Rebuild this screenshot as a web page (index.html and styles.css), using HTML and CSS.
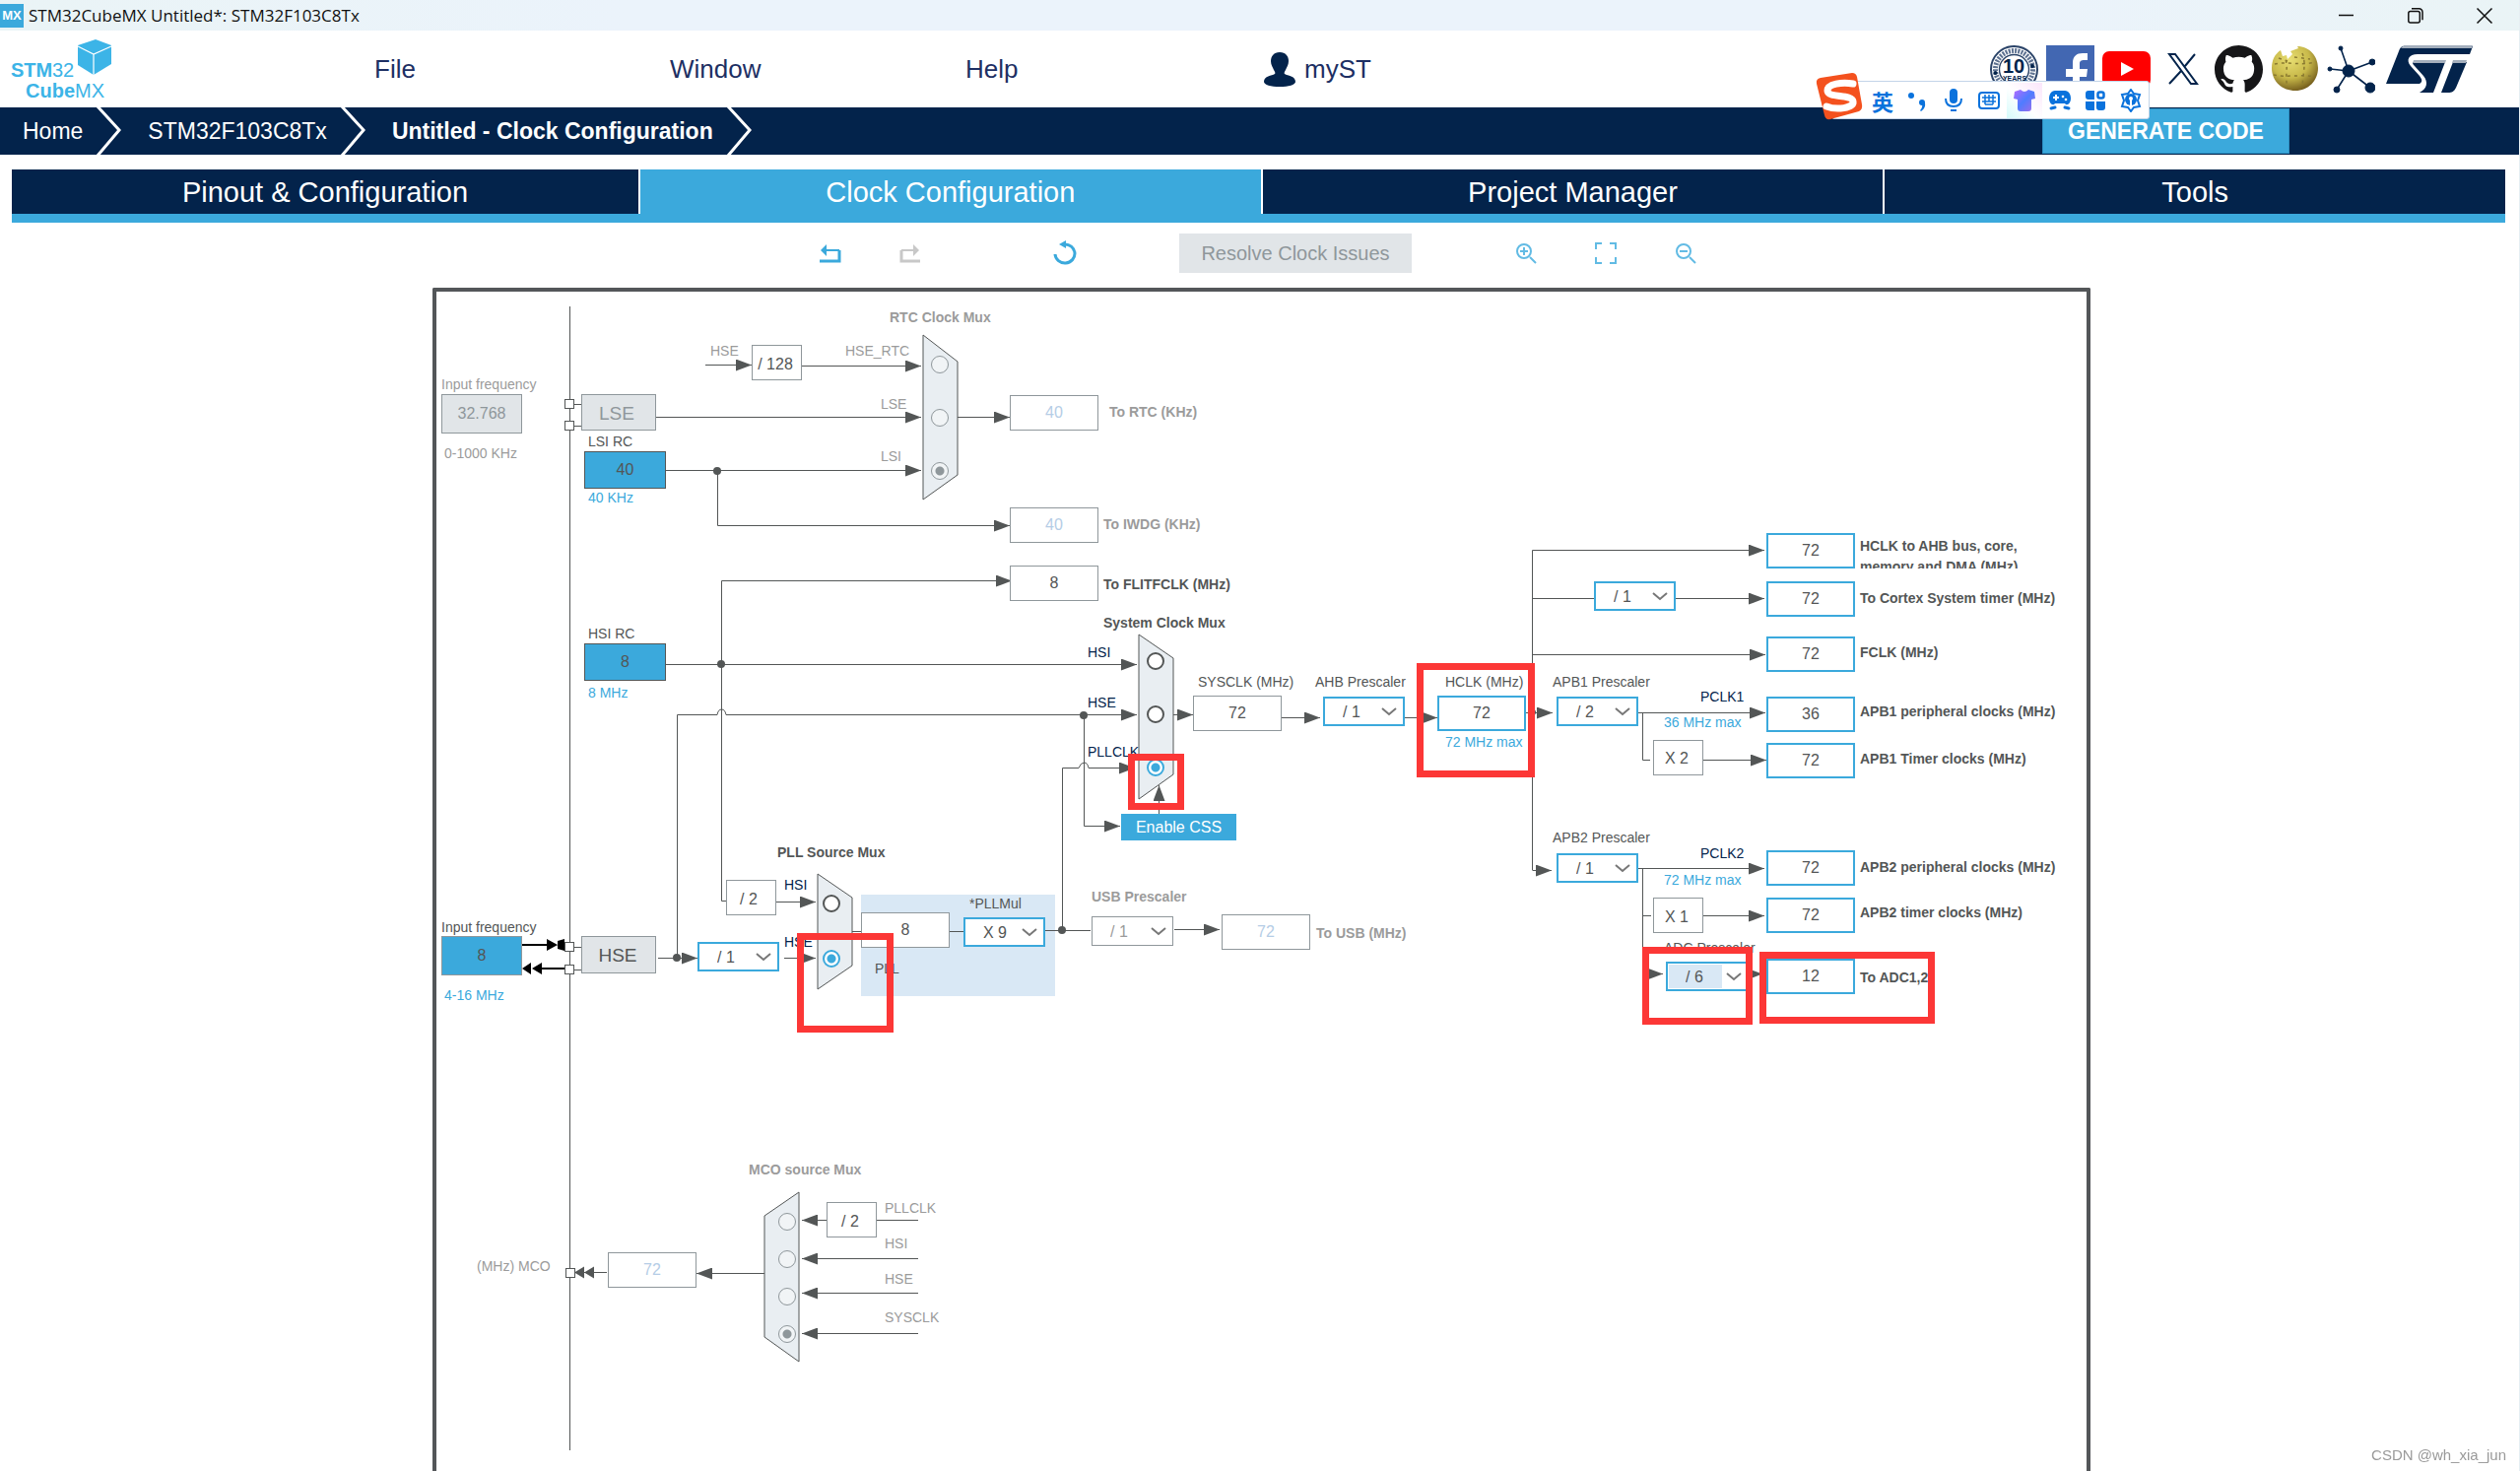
FILE: index.html
```html
<!DOCTYPE html>
<html lang="en">
<head>
    <meta charset="UTF-8">
    <meta name="viewport" content="width=device-width, initial-scale=1.0">
    <title>STM32CubeMX Untitled*: STM32F103C8Tx</title>
    <link rel="stylesheet" href="styles.css">
</head>
<body>
    <!-- window title bar -->
    <div class="titlebar">
        <span class="app-badge">MX</span>
        <span class="app-title">STM32CubeMX Untitled*: STM32F103C8Tx</span>
        <div class="window-controls">
            <button type="button" aria-label="Minimize"><svg width="16" height="16" viewBox="0 0 16 16"><path d="M0 7.5h15"/></svg></button>
            <button type="button" aria-label="Restore"><svg width="16" height="16" viewBox="0 0 16 16"><rect x="0.8" y="3.5" width="11.5" height="11.5" rx="2"/><path d="M4 0.8h7.5a3.5 3.5 0 0 1 3.5 3.5v8"/></svg></button>
            <button type="button" aria-label="Close"><svg width="16" height="16" viewBox="0 0 16 16"><path d="M0.5 0.5l15 15M15.5 0.5l-15 15"/></svg></button>
        </div>
    </div>

    <!-- main menu -->
    <header class="header">
        <svg class="logo" width="112" height="78" viewBox="0 0 112 78" role="img" aria-label="STM32 CubeMX">
            <path fill="#3cb4e7" d="M71 15L89 9l16 6v19L87 45 71 35z"/>
            <path fill="none" stroke="#fff" stroke-width="1.2" d="M71 16l16 8 18-8M87 24v21"/>
            <text x="3" y="47" class="logo-bold">STM</text>
            <text x="45" y="47" class="logo-thin">32</text>
            <text x="18" y="68" class="logo-bold">Cube</text>
            <text x="68" y="68" class="logo-thin">MX</text>
        </svg>
        <nav class="menu">
            <a href="#file">File</a>
            <a href="#window">Window</a>
            <a href="#help">Help</a>
            <a href="#myst">
                <svg width="36" height="36" viewBox="0 0 36 36"><path fill="#03234b" d="M19 1c6 0 9 4 9 9 0 4-2 6-3 9-1 2-2 3-1 4 3 2 11 2 11 8 0 3-7 5-16 5S3 34 3 31c0-6 8-6 11-8 1-1 0-2-1-4-1-3-3-5-3-9 0-5 3-9 9-9z"/></svg>
                myST</a>
        </nav>
        <div class="social">
            <a href="#ten-years" aria-label="Longevity 10 years">
                <svg width="49" height="49" viewBox="0 0 49 49">
                    <circle cx="24.5" cy="24.5" r="23.5" fill="#fff" stroke="#2a4368" stroke-width="2"/>
                    <circle cx="24.5" cy="24.5" r="19" fill="none" stroke="#5d7190" stroke-width="5" stroke-dasharray="2 1.2"/>
                    <circle cx="24.5" cy="24.5" r="15" fill="#fff" stroke="#2a4368" stroke-width="1.4"/>
                    <text x="24" y="28" class="stamp-number">10</text>
                    <text x="25" y="36" class="stamp-years">YEARS</text>
                    <circle cx="5.5" cy="28" r="2" fill="#03234b"/><circle cx="43" cy="21" r="2" fill="#03234b"/>
                </svg>
            </a>
            <a href="#facebook" aria-label="Facebook">
                <svg width="49" height="49" viewBox="0 0 49 49"><rect width="49" height="49" fill="#4267b2"/><path fill="#fff" d="M27 49V32h-7v-8h7v-6c0-7 4-10 10-10h5v7h-3c-4 0-5 1-5 4v5h8l-1 8h-7v17z"/></svg>
            </a>
            <a href="#youtube" aria-label="YouTube">
                <svg width="49" height="49" viewBox="0 0 49 49"><rect y="6" width="49" height="36" rx="7" fill="#f00"/><path fill="#fff" d="M19 17v14l13-7z"/></svg>
            </a>
            <a href="#x" aria-label="X">
                <svg width="49" height="49" viewBox="0 0 49 49" fill="none" stroke="#03234b" stroke-width="2"><path d="M11 9h6l22 30h-6zM37 9L27 21M23 26L11 39"/></svg>
            </a>
            <a href="#github" aria-label="GitHub">
                <svg width="49" height="49" viewBox="0 0 16 16"><path fill="#161618" d="M8 0C3.58 0 0 3.58 0 8c0 3.54 2.29 6.53 5.47 7.59.4.07.55-.17.55-.38 0-.19-.01-.82-.01-1.49-2.01.37-2.53-.49-2.69-.94-.09-.23-.48-.94-.82-1.13-.28-.15-.68-.52-.01-.53.63-.01 1.08.58 1.23.82.72 1.21 1.87.87 2.33.66.07-.52.28-.87.51-1.07-1.78-.2-3.64-.89-3.64-3.95 0-.87.31-1.59.82-2.15-.08-.2-.36-1.02.08-2.12 0 0 .67-.21 2.2.82.64-.18 1.32-.27 2-.27s1.36.09 2 .27c1.53-1.04 2.2-.82 2.2-.82.44 1.1.16 1.92.08 2.12.51.56.82 1.27.82 2.15 0 3.07-1.87 3.75-3.65 3.95.29.25.54.73.54 1.48 0 1.07-.01 1.93-.01 2.2 0 .21.15.46.55.38A8.01 8.01 0 0 0 16 8c0-4.42-3.58-8-8-8z"/></svg>
            </a>
            <a href="#wiki" aria-label="Wiki">
                <svg width="49" height="49" viewBox="0 0 49 49">
                    <defs><radialGradient id="globe" cx="0.4" cy="0.3" r="0.75"><stop offset="0" stop-color="#e8de72"/><stop offset="0.55" stop-color="#c8b94a"/><stop offset="1" stop-color="#6c5418"/></radialGradient></defs>
                    <path fill="url(#globe)" d="M10 5l2 6 4-1 1 4 5-5-2-3 8-3-1-2c12 0 21 10 21 22 0 13-10 23-23 23S1 37 1 23C1 15 4 9 10 5z"/>
                    <path fill="none" stroke="#8a7a30" stroke-width="1.5" stroke-dasharray="3 4" d="M4 19c12-3 26 2 42-2M3 30c12 3 28-1 42 2M15 15c3 8-1 16 2 28M32 8c4 9 1 20 0 34M8 13l9 3M24 12l16 2"/>
                </svg>
            </a>
            <a href="#community" aria-label="Community">
                <svg width="49" height="49" viewBox="0 0 49 49" fill="#03234b" stroke="#03234b"><path stroke-width="1.6" d="M22 26L14 3M22 26L46 17M22 26L3 24M22 26L10 45M22 26l22 17"/><circle cx="22" cy="26" r="6"/><circle cx="14" cy="3" r="2"/><circle cx="46" cy="17" r="3"/><circle cx="3" cy="24" r="2"/><circle cx="10" cy="45" r="3"/><circle cx="44" cy="43" r="5"/></svg>
            </a>
            <a href="#st" aria-label="STMicroelectronics">
                <svg class="st-logo" width="88" height="49" viewBox="0 0 88 49" fill="#03234b">
                    <path d="M18 1h70l-3 8H32c-9 0-12 6-7 12l9 10c3 4 3 6 0 8H0L13 6c1-3 2-5 5-5z"/>
                    <path d="M27 17h33L48 48H34c8-4 9-11 4-17l-9-10c-2-2-2-3-2-4zM68 17h14L71 43c-2 4-4 5-8 5h-7z"/>
                    <path fill="#a3aebc" d="M18 0h70l-1 3H15zM28 15h33l-1 3H27zM68 15h14l-1 3H67z"/>
                </svg>
            </a>
        </div>

        <!-- input method bar -->
        <div class="ime">
            <svg class="ime-logo" width="48" height="48" viewBox="0 0 48 48"><path fill="#f4511e" d="M5 5L37 0q4 0 5 4l5 28q1 5-3 7L15 47q-5 1-6-4L1 11q-1-5 4-6z"/><path fill="none" stroke="#fff" stroke-width="7" stroke-linecap="round" d="M38 11C27 9 12 11 12 18c0 8 25 3 26 11 1 7-17 9-27 5"/></svg>
            <button type="button" lang="zh-CN">英</button>
            <button type="button" aria-label="Punctuation"><svg width="24" height="24" viewBox="0 0 24 24"><circle cx="5" cy="7" r="3"/><circle cx="16" cy="14" r="3"/><path d="M19 14q1 6-4 9l-1-1q3-3 2-7z"/></svg></button>
            <button type="button" aria-label="Voice"><svg width="24" height="24" viewBox="0 0 24 24"><rect x="8" width="8" height="15" rx="4"/><path fill="none" stroke="#0a72dc" stroke-width="2" d="M4 10c0 5 3 8 8 8s8-3 8-8"/><rect x="9" y="21" width="6" height="2"/></svg></button>
            <button type="button" aria-label="Keyboard"><svg class="outline" width="24" height="24" viewBox="0 0 24 24"><rect x="2" y="4" width="20" height="16" rx="3"/><path stroke-width="1.5" d="M5 9h14M5 13h14M8 6v10M12 6v7M16 6v10M8 16h8"/></svg></button>
            <button type="button" class="ime-skin" aria-label="Skin"><svg width="24" height="24" viewBox="0 0 24 24"><defs><linearGradient id="skin" x1="0" y1="0" x2="1" y2="1"><stop offset="0" stop-color="#b56bff"/><stop offset="0.5" stop-color="#4f7cff"/><stop offset="1" stop-color="#a66be8"/></linearGradient></defs><path fill="url(#skin)" d="M2 3l6-2q4 4 8 0l6 2 1 7-4 1v9q0 3-3 3H8q-3 0-3-3v-9l-4-1z"/></svg></button>
            <button type="button" aria-label="Games"><svg width="24" height="24" viewBox="0 0 24 24"><path d="M7 2h10c4 0 6 4 6 8 0 5-4 8-6 5H7c-2 3-6 0-6-5 0-4 2-8 6-8z"/><path fill="none" stroke="#0a72dc" stroke-width="3" stroke-linecap="round" d="M3 20l4-1M21 20l-4-1"/><path stroke="#fff" stroke-width="2" d="M5 9h6M8 6v6"/><circle cx="15" cy="8" r="1.3" fill="#fff"/><circle cx="18" cy="11" r="1.3" fill="#fff"/></svg></button>
            <button type="button" aria-label="Toolbox"><svg width="24" height="24" viewBox="0 0 24 24"><path d="M5 2h6v9H5q-3 0-3-3V5q0-3 3-3zM2 13h9v9H5q-3 0-3-3zM13 13h9v6q0 3-3 3h-3q-3 0-3-3z"/><rect x="14.5" y="3.5" width="6" height="6" rx="2" fill="none" stroke="#0a72dc" stroke-width="2.5"/></svg></button>
            <button type="button" aria-label="Settings"><svg width="24" height="24" viewBox="0 0 24 24"><path fill="none" stroke="#0a72dc" stroke-width="2" d="M12 1l3 4 6 1-2 6 2 6-6 1-3 4-3-4-6-1 2-6-2-6 6-1z"/><circle cx="12" cy="11" r="6"/><path stroke="#fff" stroke-width="2" d="M12 10v9"/><circle cx="12" cy="10" r="2" fill="#fff"/></svg></button>
        </div>
    </header>

    <!-- breadcrumb -->
    <div class="breadcrumb">
        <a href="#home">Home</a>
        <svg width="26" height="48" viewBox="0 0 26 48"><path d="M2 -1l22 24L2 49"/></svg>
        <a href="#mcu">STM32F103C8Tx</a>
        <svg width="26" height="48" viewBox="0 0 26 48"><path d="M2 -1l22 24L2 49"/></svg>
        <a href="#clock" class="current">Untitled - Clock Configuration</a>
        <svg width="26" height="48" viewBox="0 0 26 48"><path d="M2 -1l22 24L2 49"/></svg>
        <button type="button" class="generate">GENERATE CODE</button>
    </div>

    <!-- tabs -->
    <div class="tabs" role="tablist">
        <button type="button" role="tab" class="tab">Pinout &amp; Configuration</button>
        <button type="button" role="tab" class="tab active" aria-selected="true">Clock Configuration</button>
        <button type="button" role="tab" class="tab">Project Manager</button>
        <button type="button" role="tab" class="tab">Tools</button>
    </div>

    <!-- toolbar -->
    <div class="toolbar">
        <div class="tool-group">
            <button type="button" aria-label="Undo"><svg width="24" height="24" viewBox="0 0 24 24"><path stroke-width="3" d="M1 20h20V9"/><path stroke-width="2" d="M21 9H4"/><path class="solid" d="M2 9l6-6v12z"/></svg></button>
            <button type="button" aria-label="Redo" class="off" disabled><svg width="24" height="24" viewBox="0 0 24 24"><path stroke-width="3" d="M22 20H3V9"/><path stroke-width="2" d="M3 9h16"/><path class="solid" d="M21 9l-6-6v12z"/></svg></button>
        </div>
        <button type="button" aria-label="Reset"><svg width="24" height="24" viewBox="0 0 24 24"><path stroke-width="3" d="M2 13a10 9.5 0 1 0 9-10"/><path class="solid" d="M6 3l7-4v8z"/></svg></button>
        <button type="button" class="resolve" disabled>Resolve Clock Issues</button>
        <div class="tool-group fine">
            <button type="button" aria-label="Zoom in"><svg width="24" height="24" viewBox="0 0 24 24"><circle cx="10" cy="10" r="7"/><path d="M6 10h8M10 6v8"/><path d="M16 16l6 6"/></svg></button>
            <button type="button" aria-label="Best fit"><svg width="24" height="24" viewBox="0 0 24 24"><path d="M2 8V2h6M16 2h6v6M22 16v6h-6M8 22H2v-6"/></svg></button>
            <button type="button" aria-label="Zoom out"><svg width="24" height="24" viewBox="0 0 24 24"><circle cx="10" cy="10" r="7"/><path d="M6 10h8"/><path d="M16 16l6 6"/></svg></button>
        </div>
    </div>

    <!-- clock tree -->
    <main class="workspace">
        <div class="diagram">
            <svg class="wiring" width="1683" height="1201" viewBox="440 292 1683 1201">
                <defs>
                    <marker id="arrow" viewBox="0 0 16 12" refX="16" refY="6" markerWidth="16" markerHeight="12" markerUnits="userSpaceOnUse" orient="auto"><path d="M0 0l16 6-16 6z" fill="#535656"/></marker>
                    <clipPath id="ahb-clip"><rect x="1880" y="540" width="200" height="37"/></clipPath>
                </defs>

                <!-- PLL area -->
                <rect x="875" y="908" width="197" height="103" fill="#d9e8f5"/>

                <!-- wires -->
                <g class="wire">
                    <path d="M579.5 311V1472"/>
                    <path d="M584 410.5h7M584 432.5h7M584 961.5h7M584 984.5h7"/>
                    <path class="to" d="M717 370.5H764"/>
                    <path class="to" d="M815 371.5H936"/>
                    <path class="to" d="M666 423.5H936"/>
                    <path class="to" d="M677 477.5H936"/>
                    <path class="to" d="M729.5 477V533.5H1026"/>
                    <path class="to" d="M973 423.5H1026"/>
                    <path class="to" d="M733.5 674V589.5H1028"/>
                    <path class="to" d="M677 674.5H1155"/>
                    <path d="M733.5 674V914.5H738"/>
                    <path class="to" d="M688.5 972V725.5H729Q730 720 733.5 720T738 725.5H1155"/>
                    <path class="to" d="M1101.5 726V838.5H1138"/>
                    <path class="to" d="M1079.5 944V779.5H1096Q1098 774 1101.5 774T1106 779.5H1153"/>
                    <path class="to" d="M1177.5 826V797"/>
                    <path class="to" d="M1192 725.5H1212"/>
                    <path class="to" d="M1302 728.5H1341"/>
                    <path class="to" d="M1427 728.5H1460"/>
                    <path class="to" d="M1550 723.5H1577"/>
                    <path class="to" d="M1556.5 883V558.5H1792"/>
                    <path d="M1556.5 607.5H1619"/>
                    <path class="to" d="M1701 607.5H1792"/>
                    <path class="to" d="M1556.5 664.5H1793"/>
                    <path class="to" d="M1556.5 883.5H1576"/>
                    <path class="to" d="M1664 723.5H1793"/>
                    <path d="M1668.5 723V771.5H1676"/>
                    <path class="to" d="M1730 771.5H1794"/>
                    <path class="to" d="M1664 881.5H1792"/>
                    <path class="to" d="M1668.5 881V988.5H1689"/>
                    <path d="M1668.5 929.5H1677"/>
                    <path class="to" d="M1730 929.5H1792"/>
                    <path class="to" d="M1770 988.5H1790"/>
                    <path class="to" d="M789 915.5H829"/>
                    <path class="to" d="M669 972.5H709"/>
                    <path class="to" d="M797 972.5H829"/>
                    <path d="M866 945.5h9M964 945.5h15M1062 944.5H1108"/>
                    <path class="to" d="M1193 943.5H1239"/>
                    <path class="to" d="M840 1238.5H815"/>
                    <path d="M891 1238.5H933"/>
                    <path class="to" d="M933 1277.5H815"/>
                    <path class="to" d="M933 1312.5H815"/>
                    <path class="to" d="M933 1353.5H815"/>
                    <path class="to" d="M777 1292.5H708"/>
                    <path d="M617 1291.5H590"/>
                </g>
                <path fill="#535656" d="M584 1291.5l10-6v12zM594 1291.5l10-6v12z"/>
                <path stroke="#000" stroke-width="2" d="M531 959h26M551 983h23"/>
                <path fill="#000" d="M567 959l-11-6v12zM574 953v12l-7-2v-8zM531 983l9-6v12zM541 983l10-6v12z"/>

                <!-- junctions -->
                <g fill="#535656">
                    <circle cx="729" cy="478" r="4"/><circle cx="733" cy="674" r="4"/><circle cx="688" cy="972" r="4"/>
                    <circle cx="1101" cy="726" r="4"/><circle cx="1079" cy="944" r="4"/><circle cx="1557" cy="723" r="3"/>
                </g>

                <!-- pins -->
                <g class="box pin">
                    <rect x="574.5" y="405.5" width="9" height="9"/><rect x="574.5" y="427.5" width="9" height="9"/>
                    <rect x="574.5" y="956.5" width="9" height="9"/><rect x="574.5" y="979.5" width="9" height="9"/>
                    <rect x="575.5" y="1287.5" width="9" height="9"/>
                </g>

                <!-- multiplexers -->
                <g class="mux">
                    <path d="M938 340L973 367V482L938 507z"/>
                    <path d="M1157 644L1192 668V786L1157 811z"/>
                    <path d="M831 887L866 911V980L831 1004z"/>
                    <path d="M812 1210L777 1234V1357L812 1382z"/>
                </g>

                <!-- fixed dividers, multipliers and oscillators -->
                <g class="box">
                    <rect x="764.5" y="350.5" width="50" height="35"/><rect x="738.5" y="893.5" width="50" height="35"/>
                    <rect x="1679.5" y="751.5" width="50" height="35"/><rect x="1679.5" y="911.5" width="50" height="35"/>
                    <rect x="840.5" y="1220.5" width="50" height="35"/>
                    <rect class="osc-box" x="591.5" y="400.5" width="75" height="36"/><rect class="osc-box" x="591.5" y="950.5" width="75" height="37"/>
                </g>
                <g class="value">
                    <text x="788" y="375">/ 128</text><text x="761" y="918">/ 2</text>
                    <text x="1703" y="775">X 2</text><text x="1703" y="936">X 1</text><text x="864" y="1245">/ 2</text>
                </g>
                <g class="osc"><text x="627" y="426" fill="#8f979b">LSE</text><text x="628" y="976">HSE</text></g>

                <!-- captions -->
                <g class="caption muted">
                    <text x="449" y="395">Input frequency</text><text x="452" y="465">0-1000 KHz</text>
                    <text x="722" y="361">HSE</text><text x="859" y="361">HSE_RTC</text>
                    <text x="895" y="415">LSE</text><text x="895" y="468">LSI</text>
                    <text x="485" y="1290">(MHz) MCO</text>
                    <text x="899" y="1231">PLLCLK</text><text x="899" y="1267">HSI</text><text x="899" y="1303">HSE</text><text x="899" y="1342">SYSCLK</text>
                </g>
                <g class="caption muted strong">
                    <text x="904" y="327">RTC Clock Mux</text><text x="1127" y="423">To RTC (KHz)</text><text x="1121" y="537">To IWDG (KHz)</text>
                    <text x="1109" y="915">USB Prescaler</text><text x="1337" y="952">To USB (MHz)</text><text x="761" y="1192">MCO source Mux</text>
                </g>
                <g class="caption">
                    <text x="598" y="453">LSI RC</text><text x="598" y="648">HSI RC</text><text x="449" y="946">Input frequency</text>
                    <text x="1217" y="697">SYSCLK (MHz)</text><text x="1336" y="697">AHB Prescaler</text><text x="1468" y="697">HCLK (MHz)</text>
                    <text x="1577" y="697">APB1 Prescaler</text><text x="1577" y="855">APB2 Prescaler</text><text x="1690" y="967">ADC Prescaler</text>
                    <text x="985" y="922">*PLLMul</text><text x="889" y="988">PLL</text>
                </g>
                <g class="caption strong">
                    <text x="1121" y="598">To FLITFCLK (MHz)</text><text x="1121" y="637">System Clock Mux</text>
                    <text x="790" y="870">PLL Source Mux</text>
                    <g clip-path="url(#ahb-clip)"><text x="1889" y="559">HCLK to AHB bus, core,</text><text x="1889" y="580">memory and DMA (MHz)</text></g>
                    <text x="1889" y="612">To Cortex System timer (MHz)</text><text x="1889" y="667">FCLK (MHz)</text>
                    <text x="1889" y="727">APB1 peripheral clocks (MHz)</text><text x="1889" y="775">APB1 Timer clocks (MHz)</text>
                    <text x="1889" y="885">APB2 peripheral clocks (MHz)</text><text x="1889" y="931">APB2 timer clocks (MHz)</text>
                    <text x="1889" y="997">To ADC1,2</text>
                </g>
                <g class="caption navy">
                    <text x="1105" y="667">HSI</text><text x="1105" y="718">HSE</text><text x="1105" y="768">PLLCLK</text>
                    <text x="797" y="903">HSI</text><text x="797" y="961">HSE</text><text x="1727" y="712">PCLK1</text><text x="1727" y="871">PCLK2</text>
                </g>
                <g class="caption blue">
                    <text x="598" y="510">40 KHz</text><text x="598" y="708">8 MHz</text><text x="452" y="1015">4-16 MHz</text>
                    <text x="1468" y="758">72 MHz max</text><text x="1690" y="738">36 MHz max</text><text x="1690" y="898">72 MHz max</text>
                </g>
            </svg>

            <!-- clock sources -->
            <input class="source off lse-in" value="32.768" aria-label="LSE input frequency" disabled>
            <input class="source hse-in" value="8" aria-label="HSE input frequency">
            <input class="source rc lsi-rc" value="40" aria-label="LSI RC" readonly>
            <input class="source rc hsi-rc" value="8" aria-label="HSI RC" readonly>

            <!-- frequencies -->
            <input class="freq unused rtc-out" value="40" aria-label="To RTC (KHz)" disabled>
            <input class="freq unused iwdg-out" value="40" aria-label="To IWDG (KHz)" disabled>
            <input class="freq flit-out" value="8" aria-label="To FLITFCLK (MHz)" readonly>
            <input class="freq sysclk" value="72" aria-label="SYSCLK (MHz)" readonly>
            <input class="freq live hclk" value="72" aria-label="HCLK (MHz)">
            <input class="freq live ahb-out" value="72" aria-label="HCLK to AHB bus, core, memory and DMA (MHz)">
            <input class="freq live cortex-out" value="72" aria-label="To Cortex System timer (MHz)">
            <input class="freq live fclk-out" value="72" aria-label="FCLK (MHz)">
            <input class="freq live apb1-out" value="36" aria-label="APB1 peripheral clocks (MHz)">
            <input class="freq live apb1-timer" value="72" aria-label="APB1 Timer clocks (MHz)">
            <input class="freq live apb2-out" value="72" aria-label="APB2 peripheral clocks (MHz)">
            <input class="freq live apb2-timer" value="72" aria-label="APB2 timer clocks (MHz)">
            <input class="freq live adc-out" value="12" aria-label="To ADC1,2">
            <input class="freq pll-in" value="8" aria-label="PLL input (MHz)" readonly>
            <input class="freq unused usb-out" value="72" aria-label="To USB (MHz)" disabled>
            <input class="freq unused mco-out" value="72" aria-label="MCO (MHz)" disabled>

            <!-- prescalers -->
            <select class="prescaler hse-div" aria-label="HSE prescaler"><option>/ 1</option></select>
            <select class="prescaler pll-mul" aria-label="PLLMul"><option>X 9</option></select>
            <select class="prescaler unused usb-div" aria-label="USB Prescaler" disabled><option>/ 1</option></select>
            <select class="prescaler ahb-div" aria-label="AHB Prescaler"><option>/ 1</option></select>
            <select class="prescaler cortex-div" aria-label="Cortex prescaler"><option>/ 1</option></select>
            <select class="prescaler apb1-div" aria-label="APB1 Prescaler"><option>/ 2</option></select>
            <select class="prescaler apb2-div" aria-label="APB2 Prescaler"><option>/ 1</option></select>
            <select class="prescaler focused adc-div" aria-label="ADC Prescaler"><option>/ 6</option></select>

            <!-- mux inputs -->
            <div class="mux-inputs rtc-mux">
                <input type="radio" name="rtc" aria-label="RTC from HSE" disabled>
                <input type="radio" name="rtc" aria-label="RTC from LSE" disabled>
                <input type="radio" name="rtc" aria-label="RTC from LSI" disabled checked>
            </div>
            <div class="mux-inputs sys-mux">
                <input type="radio" name="sys" aria-label="System clock from HSI">
                <input type="radio" name="sys" aria-label="System clock from HSE">
                <input type="radio" name="sys" aria-label="System clock from PLLCLK" checked>
            </div>
            <div class="mux-inputs pll-mux">
                <input type="radio" name="pll" aria-label="PLL from HSI">
                <input type="radio" name="pll" aria-label="PLL from HSE" checked>
            </div>
            <div class="mux-inputs mco-mux">
                <input type="radio" name="mco" aria-label="MCO from PLLCLK" disabled>
                <input type="radio" name="mco" aria-label="MCO from HSI" disabled>
                <input type="radio" name="mco" aria-label="MCO from HSE" disabled>
                <input type="radio" name="mco" aria-label="MCO from SYSCLK" disabled checked>
            </div>

            <button type="button" class="enable-css">Enable CSS</button>

            <!-- highlights -->
            <div class="mark mark-pll"></div>
            <div class="mark mark-sys"></div>
            <div class="mark mark-hclk"></div>
            <div class="mark mark-adc-div"></div>
            <div class="mark mark-adc"></div>
        </div>
    </main>

    <div class="watermark">CSDN @wh_xia_jun</div>
</body>
</html>
```
FILE: styles.css
```css
:root {
    --navy: #03234b;
    --blue: #3ba9dc;
    --grey: #8f979b;
    --text: #535656;
    --muted: #9b9b9b;
    --panel: #e1e5e8;
    --mark: #fc3736;
    --chevron: url("data:image/svg+xml,%3Csvg xmlns='http://www.w3.org/2000/svg' width='16' height='9'%3E%3Cpath d='M1 1l7 6 7-6' fill='none' stroke='%23777' stroke-width='2'/%3E%3C/svg%3E");
}

* {
    margin: 0;
    padding: 0;
    box-sizing: border-box;
}

body {
    min-height: 100vh;
    display: flex;
    flex-direction: column;
    border-right: 1px solid #e6eff3;
    background: #fff;
    color: var(--text);
    font-family: "Liberation Sans", Arial, sans-serif;
}

button,
input,
select {
    font-family: inherit;
    border: 0;
    background: none;
}

a {
    color: inherit;
    text-decoration: none;
}

svg {
    display: block;
}

/* title bar */
.titlebar {
    display: flex;
    align-items: center;
    height: 31px;
    background: linear-gradient(to right, #eaf4f6, #ebf3fb 25%, #ebf3fb 80%, #eaf4f6);
    color: #111;
}

.app-badge {
    width: 24px;
    height: 24px;
    margin-right: 5px;
    background: var(--blue);
    color: #fff;
    font-size: 13px;
    font-weight: bold;
    line-height: 24px;
    text-align: center;
}

.app-title {
    font-family: "Open Sans", "Noto Sans", sans-serif;
    font-size: 17px;
}

.window-controls {
    display: flex;
    margin-left: auto;
}

.window-controls button {
    display: flex;
    justify-content: center;
    align-items: center;
    width: 70px;
    height: 28px;
}

.window-controls svg {
    fill: none;
    stroke: #111;
    stroke-width: 1.5;
    overflow: visible;
}

/* header */
.header {
    position: relative;
    display: flex;
    align-items: center;
    height: 78px;
    padding: 0 47px 0 8px;
}

.logo-bold,
.logo-thin {
    fill: #3cb4e7;
    font-size: 20px;
}

.logo-bold {
    font-weight: bold;
}

.menu {
    flex: 1;
    display: flex;
    margin-left: 260px;
    color: #1d2f63;
    font-size: 26px;
}

.menu a {
    display: flex;
    align-items: center;
    gap: 8px;
    flex: 0 1 300px;
}

.social {
    display: flex;
    gap: 8px;
}

.st-logo {
    margin-left: 3px;
}

.stamp-number,
.stamp-years {
    fill: var(--navy);
    font-weight: bold;
    text-anchor: middle;
}

.stamp-number {
    font-size: 20px;
}

.stamp-years {
    font-size: 7px;
}

/* input method bar */
.ime {
    position: absolute;
    z-index: 2;
    top: 51px;
    right: 375px;
    display: flex;
    align-items: center;
    height: 39px;
    padding-left: 33px;
    border: 1px solid #c3d4e8;
    border-radius: 3px;
    background: #fff;
}

.ime-logo {
    position: absolute;
    left: 0;
    bottom: -2px;
    margin-left: -17px;
}

.ime button {
    display: flex;
    justify-content: center;
    align-items: center;
    width: 36px;
    height: 36px;
    color: #0a72dc;
    font-family: "Noto Sans CJK SC", sans-serif;
    font-size: 22px;
    font-weight: bold;
}

.ime button svg {
    fill: #0a72dc;
}

.ime button .outline {
    fill: none;
    stroke: #0a72dc;
    stroke-width: 2;
}

.ime .ime-skin {
    background: linear-gradient(45deg, #d5fbfb, #fff 45%, #fbe6fb);
}

/* breadcrumb */
.breadcrumb {
    display: flex;
    align-items: center;
    gap: 13px;
    height: 48px;
    padding: 0 233px 0 23px;
    background: var(--navy);
    color: #fff;
    font-size: 23px;
}

.breadcrumb svg {
    margin-right: 14px;
    fill: none;
    stroke: #fff;
    stroke-width: 3;
}

.breadcrumb .current {
    font-weight: bold;
}

.generate {
    width: 251px;
    height: 46px;
    margin-left: auto;
    border: 1px solid #2d8fc2;
    background: var(--blue);
    color: #fff;
    font-size: 23px;
    font-weight: bold;
}

/* tabs */
.tabs {
    display: flex;
    gap: 2px;
    margin: 15px 14px 0 12px;
    border-bottom: 9px solid var(--blue);
}

.tab {
    flex: 1;
    height: 45px;
    padding-top: 2px;
    background: var(--navy);
    color: #fff;
    font-size: 29px;
}

.tab:first-child {
    flex-grow: 1.01;
}

.tab.active {
    background: var(--blue);
}

/* toolbar */
.toolbar {
    display: flex;
    justify-content: center;
    align-items: center;
    gap: 104px;
    height: 66px;
    padding: 0 3px 4px 0;
}

.tool-group {
    display: flex;
    gap: 57px;
}

.tool-group:first-child {
    margin-right: 29px;
}

.toolbar svg {
    fill: none;
    stroke: var(--blue);
    overflow: visible;
}

.toolbar .fine svg {
    stroke: #62bbe4;
    stroke-width: 2;
}

.toolbar .solid {
    fill: var(--blue);
    stroke: none;
}

.toolbar .off svg {
    stroke: #c8c8c8;
}

.toolbar .off .solid {
    fill: #c8c8c8;
}

.resolve {
    width: 236px;
    height: 40px;
    background: var(--panel);
    color: var(--grey);
    font-size: 20px;
}

/* clock tree */
.workspace {
    flex: 1;
    display: flex;
    justify-content: center;
    padding-left: 4px;
}

.diagram {
    position: relative;
    flex: none;
    overflow: hidden;
    border-radius: 2px 2px 0 0;
}

.diagram::before {
    content: "";
    position: absolute;
    inset: 0;
    border: 4px solid #535659;
    border-bottom: 0;
}

.wire {
    fill: none;
    stroke: #535656;
}

.wire .to {
    marker-end: url(#arrow);
}

.mux {
    fill: #e9eef2;
    stroke: #535656;
}

.box {
    fill: #fff;
    stroke: var(--grey);
}

.box.pin {
    stroke: var(--text);
}

.osc-box {
    fill: var(--panel);
}

.value,
.osc {
    fill: var(--text);
    font-size: 16px;
    text-anchor: middle;
}

.osc {
    font-size: 19px;
}

.caption {
    fill: var(--text);
    font-size: 14px;
}

.caption.strong {
    font-weight: bold;
}

.caption.muted {
    fill: var(--muted);
}

.caption.navy {
    fill: var(--navy);
}

.caption.blue {
    fill: var(--blue);
}

.source,
.freq,
.prescaler,
.mux-inputs,
.enable-css,
.mark {
    position: absolute;
}

.source,
.freq {
    width: 90px;
    height: 36px;
    border: 1px solid var(--grey);
    background: #fff;
    color: var(--text);
    font-size: 16px;
    text-align: center;
}

.source {
    width: 82px;
    height: 40px;
    background: var(--blue);
}

.source.rc {
    width: 83px;
    height: 38px;
    border-color: var(--text);
}

.source.off {
    background: var(--panel);
    color: var(--grey);
}

.freq.unused {
    color: #b5cde6;
}

.freq.live {
    border: 2px solid var(--blue);
}

.lse-in { left: 9px; top: 108px; }
.hse-in { left: 9px; top: 658px; }
.lsi-rc { left: 154px; top: 166px; }
.hsi-rc { left: 154px; top: 361px; }

.rtc-out { left: 586px; top: 109px; }
.iwdg-out { left: 586px; top: 223px; }
.flit-out { left: 586px; top: 282px; }
.sysclk { left: 772px; top: 414px; }
.hclk { left: 1020px; top: 414px; }
.ahb-out { left: 1354px; top: 249px; }
.cortex-out { left: 1354px; top: 298px; }
.fclk-out { left: 1354px; top: 354px; }
.apb1-out { left: 1354px; top: 415px; }
.apb1-timer { left: 1354px; top: 462px; }
.apb2-out { left: 1354px; top: 571px; }
.apb2-timer { left: 1354px; top: 619px; }
.adc-out { left: 1354px; top: 681px; }
.pll-in { left: 435px; top: 634px; }
.usb-out { left: 801px; top: 636px; }
.mco-out { left: 178px; top: 979px; }

.prescaler {
    width: 83px;
    height: 30px;
    padding-left: 18px;
    border: 2px solid var(--blue);
    appearance: none;
    background: #fff var(--chevron) no-repeat right 6px center;
    color: var(--text);
    font-size: 16px;
}

.prescaler.unused {
    border: 1px solid var(--grey);
    color: var(--muted);
    opacity: 1;
}

.prescaler.focused {
    background: var(--chevron) no-repeat right 4px center, linear-gradient(#d9e8f5, #d9e8f5) no-repeat 1px 1px / 54px 24px, #fff;
}

.hse-div { left: 269px; top: 664px; }
.pll-mul { left: 539px; top: 639px; }
.usb-div { left: 669px; top: 638px; }
.ahb-div { left: 904px; top: 415px; }
.cortex-div { left: 1179px; top: 298px; }
.apb1-div { left: 1141px; top: 415px; }
.apb2-div { left: 1141px; top: 574px; }
.adc-div { left: 1252px; top: 684px; }

.mux-inputs {
    display: flex;
    flex-direction: column;
    gap: 36px;
}

.mux-inputs input {
    width: 18px;
    height: 18px;
    border: 2px solid var(--text);
    border-radius: 50%;
    appearance: none;
    background: #fff;
}

.mux-inputs input:checked {
    border-color: var(--blue);
    background: radial-gradient(circle, var(--blue) 4px, #fff 5px);
}

.mux-inputs input:disabled {
    border: 1px solid var(--grey);
    background: #f1f4f6;
}

.mux-inputs input:disabled:checked {
    background: radial-gradient(circle, var(--grey) 4px, #f1f4f6 5px);
}

.rtc-mux { left: 506px; top: 69px; }
.sys-mux { left: 725px; top: 370px; }
.pll-mux { left: 396px; top: 616px; gap: 38px; }
.mco-mux { left: 351px; top: 939px; gap: 20px; }

.enable-css {
    left: 699px;
    top: 534px;
    width: 117px;
    height: 27px;
    background: var(--blue);
    color: #fff;
    font-size: 16px;
}

.mark {
    border: 7px solid var(--mark);
    pointer-events: none;
}

.mark-pll { left: 370px; top: 655px; width: 98px; height: 101px; }
.mark-sys { left: 706px; top: 473px; width: 57px; height: 57px; }
.mark-hclk { left: 999px; top: 381px; width: 120px; height: 116px; }
.mark-adc-div { left: 1228px; top: 669px; width: 112px; height: 79px; }
.mark-adc { left: 1347px; top: 674px; width: 178px; height: 73px; }

.watermark {
    position: fixed;
    right: 14px;
    bottom: 8px;
    color: #9a9a9a;
    font-size: 15px;
}
```
